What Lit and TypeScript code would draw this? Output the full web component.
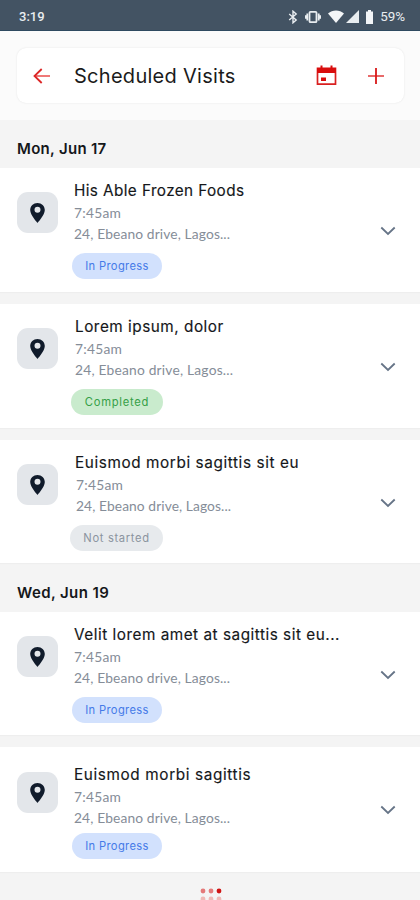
import { LitElement, html, css, svg } from "lit";
import { customElement, property } from "lit/decorators.js";
import { classMap } from "lit/directives/class-map.js";

type Status = "progress" | "completed" | "pending";

interface Visit {
  title: string;
  time: string;
  address: string;
  status: Status;
  variant: string;
}

const LABELS: Record<Status, string> = {
  progress: "In Progress",
  completed: "Completed",
  pending: "Not started",
};

const ADDRESS = "24, Ebeano drive, Lagos...";

const DAYS: { label: string; visits: Visit[] }[] = [
  {
    label: "Mon, Jun 17",
    visits: [
      { title: "His Able Frozen Foods", time: "7:45am", address: ADDRESS, status: "progress", variant: "v1" },
      { title: "Lorem ipsum, dolor", time: "7:45am", address: ADDRESS, status: "completed", variant: "v2" },
      { title: "Euismod morbi sagittis sit eu", time: "7:45am", address: ADDRESS, status: "pending", variant: "v3" },
    ],
  },
  {
    label: "Wed, Jun 19",
    visits: [
      { title: "Velit lorem amet at sagittis sit eu...", time: "7:45am", address: ADDRESS, status: "progress", variant: "v4" },
      { title: "Euismod morbi sagittis", time: "7:45am", address: ADDRESS, status: "progress", variant: "v5" },
    ],
  },
];

@customElement("visit-card")
export class VisitCard extends LitElement {
  @property({ attribute: false }) visit!: Visit;

  static styles = css`
    :host { display: block; }
    .card {
      box-sizing: border-box;
      height: 124px;
      display: flex;
      align-items: flex-start;
      background: #fff;
      padding: 0 23px 0 17px;
      box-shadow: 0 1px 1px rgba(0, 0, 0, 0.025);
    }
    .tile {
      width: 41px;
      height: 41px;
      margin-top: 24px;
      border-radius: 11px;
      background: #e3e6ea;
      display: flex;
      align-items: center;
      justify-content: center;
      flex: none;
    }
    .info {
      flex: 1;
      min-width: 0;
      margin-left: 16px;
      padding-top: 12px;
      display: flex;
      flex-direction: column;
      align-items: flex-start;
      white-space: nowrap;
    }
    .title {
      font: 400 15.3px/22px Inter, sans-serif;
      color: #15171a;
      letter-spacing: 0.4px;
      -webkit-text-stroke: 0.15px #15171a;
    }
    .time, .address {
      font: 400 13.8px/22px Lato, sans-serif;
      color: #858d98;
    }
    .time { letter-spacing: 0.25px; }
    .address { line-height: 20px; margin-bottom: 2px; letter-spacing: 0.12px; }
    .pill {
      box-sizing: border-box;
      width: 90px;
      height: 26px;
      margin: 7px 0 0 -2px;
      border-radius: 13px;
      text-align: center;
      font: 400 11.2px/26px Inter, sans-serif;
      letter-spacing: 0.35px;
    }
    .progress { background: #d2e1fd; color: #457ae8; }
    .completed { background: #c9ebcd; color: #35a047; width: 92px; margin-left: -4px; letter-spacing: 0.75px; }
    .pending { background: #e7eaed; color: #8b949f; width: 93px; margin-left: -5px; letter-spacing: 0.65px; }
    .chevron { margin-top: 58px; flex: none; }
    .v2 .info { margin-left: 17px; }
    .v2 .title { letter-spacing: 0.52px; }
    .v2 .address { letter-spacing: 0.2px; }
    .v3 .info { margin-left: 17px; }
    .v3 .title { letter-spacing: 0.6px; }
    .v3 .time, .v3 .address { margin-left: 1px; }
    .v3 .address { letter-spacing: 0.08px; }
    .v4 .title { letter-spacing: 0.52px; }
    .v5 .title { letter-spacing: 0.63px; }
    .v3 .card, .v4 .card { height: 123px; }
    .v5 .card { height: 125px; }
    .v5 .tile { margin-top: 25px; }
    .v5 .info { padding-top: 17px; }
    .v5 .pill { margin-top: 3px; }
  `;

  render() {
    const v = this.visit;
    return html`<div class=${v.variant}>
      <div class="card">
        <div class="tile">
          <svg width="15" height="20" viewBox="0 0 15 20">
            <path fill="#101b2b" fill-rule="evenodd" d="M7.5 0C3.4 0 .2 3.1.2 7.1c0 5.1 7.3 12.9 7.3 12.9s7.3-7.8 7.3-12.9C14.8 3.1 11.6 0 7.5 0zm0 3.8a3 3 0 1 1 0 6 3 3 0 0 1 0-6z"/>
          </svg>
        </div>
        <div class="info">
          <div class="title">${v.title}</div>
          <div class="time">${v.time}</div>
          <div class="address">${v.address}</div>
          <div class=${classMap({ pill: true, [v.status]: true })}>${LABELS[v.status]}</div>
        </div>
        <svg class="chevron" width="18" height="12" viewBox="0 0 18 12">
          <path d="M2.3 1.500L9 8 15.700 1.500" fill="none" stroke="#667487" stroke-width="1.8"/>
        </svg>
      </div>
    </div>`;
  }
}

@customElement("app-root")
export class AppRoot extends LitElement {
  static styles = css`
    :host {
      display: block;
      height: 900px;
      overflow: hidden;
      background: #f4f4f4;
    }
    .status {
      box-sizing: border-box;
      height: 31px;
      display: flex;
      align-items: center;
      justify-content: space-between;
      padding: 3px 15px 0 19px;
      background: #435363;
      border-bottom: 1px solid #2f4a60;
      color: #e9edf0;
      font: 500 13px/16px Roboto, sans-serif;
    }
    .battery-text { font-weight: 400; font-size: 13.4px; }
    .tray { display: flex; align-items: center; }
    .tray svg { display: block; margin-right: 7px; }
    .tray .wifi { margin-right: 2px; }
    .top {
      box-sizing: border-box;
      height: 89px;
      padding: 17px 16px 0 17px;
      background: #fbfbfb;
    }
    .bar {
      box-sizing: border-box;
      height: 55px;
      display: flex;
      align-items: center;
      padding: 0 20px 0 16px;
      border-radius: 9px;
      background: #fff;
      box-shadow: 0 0 2px rgba(0, 0, 0, 0.1);
    }
    .bar svg { display: block; flex: none; }
    .heading {
      flex: 1;
      margin-left: 23px;
      font: 400 20px/28px Inter, sans-serif;
      letter-spacing: 0.28px;
      color: #1b1b1b;
      white-space: nowrap;
    }
    .plus { margin-left: 31px; }
    .day {
      box-sizing: border-box;
      height: 48px;
      padding: 18px 17px 0;
      font: 600 15px/22px Inter, sans-serif;
      letter-spacing: 0.3px;
      color: #15171a;
    }
    .second { height: 49px; padding-top: 19px; letter-spacing: 0.4px; }
    .list { display: flex; flex-direction: column; gap: 12px; }
    .loader { display: flex; justify-content: center; padding: 15px 0 0 2px; }
  `;

  render() {
    return html`
      <div class="status">
        <span>3:19</span>
        <div class="tray">
          <svg width="10" height="14" viewBox="0 0 10 14"><path d="M1.2 4l7 6L5 12.8V1.2L8.2 4l-7 6" fill="none" stroke="#e9edf0" stroke-width="1.4"/></svg>
          <svg width="16" height="14" viewBox="0 0 16 14"><rect x="4.5" y="1.8" width="7" height="10.4" rx="1" fill="none" stroke="#e9edf0" stroke-width="1.8"/><path d="M2.3 3.5v7M.9 5.2v3.6M13.7 3.5v7M15.1 5.2v3.6" stroke="#e9edf0" stroke-width="1.8"/></svg>
          <svg class="wifi" width="16" height="13" viewBox="0 0 16 13"><path d="M0 3.4C4.500-.5 11.500-.5 16 3.400L8 13z" fill="#f3f5f7"/></svg>
          <svg width="13" height="13" viewBox="0 0 13 13"><path d="M13 0v13H0z" fill="#e9edf0"/></svg>
          <svg width="7" height="14" viewBox="0 0 7 14"><path d="M2 0h3v1.500h2V14H0V1.500h2z" fill="#f3f5f7"/></svg>
          <span class="battery-text">59%</span>
        </div>
      </div>
      <div class="top">
        <div class="bar">
          <svg width="18" height="16" viewBox="0 0 18 16"><path d="M17 8H2" fill="none" stroke="#ee6a69" stroke-width="1.8"/><path d="M8.700 1L1.500 8l7.200 7" fill="none" stroke="#dc2626" stroke-width="1.800"/></svg>
          <div class="heading">Scheduled Visits</div>
          <svg width="21" height="21" viewBox="0 0 21 21"><path d="M1.500 8v11.200h18V8" fill="none" stroke="#d92020" stroke-width="1.700"/><path d="M.7 2.500h19.600V8H.7zM4.500.5h2v3h-2zM14.500.5h2v3h-2zM5 12.500h5v3.500H5z" fill="#d90d0d"/></svg>
          <svg class="plus" width="16" height="16" viewBox="0 0 16 16"><path d="M0 8h16" stroke="#e65a5a" stroke-width="1.800"/><path d="M8 0v16" stroke="#d81818" stroke-width="1.800"/></svg>
        </div>
      </div>
      ${DAYS.map(
        (d, i) => html`
          <div class=${classMap({ day: true, second: i > 0 })}>${d.label}</div>
          <div class="list">${d.visits.map((v) => html`<visit-card .visit=${v}></visit-card>`)}</div>
        `
      )}
      <div class="loader">
        <svg width="22" height="22" viewBox="0 0 22 22">
          ${[0, 1, 2].map((r) =>
            [0, 1, 2].map(
              (c) => svg`<circle cx=${3 + c * 8} cy=${4 + r * 8} r="2.400" fill=${r === 0 ? (c === 2 ? "#cf1414" : "#e47a7a") : "#f0b9b6"}></circle>`
            )
          )}
        </svg>
      </div>
    `;
  }
}
